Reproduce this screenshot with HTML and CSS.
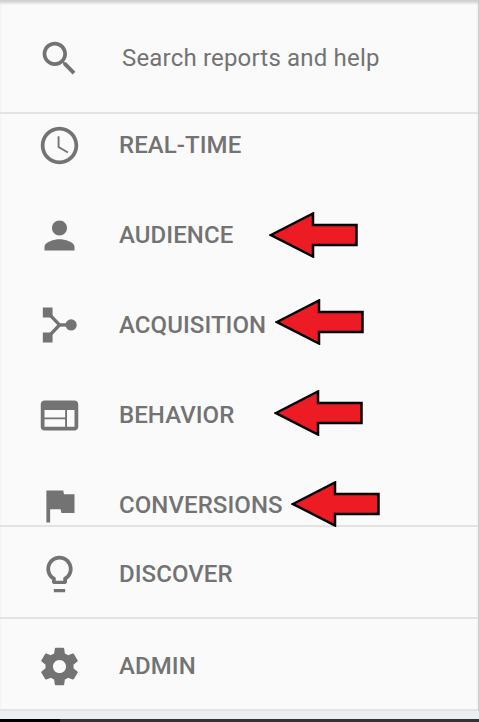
FILE: index.html
```html
<!DOCTYPE html>
<html lang="en">
<head>
  <meta charset="UTF-8">
  <meta name="viewport" content="width=device-width, initial-scale=1.0">
  <title>Reports menu</title>
  <link rel="stylesheet" href="styles.css">
</head>
<body>
  <svg class="sprite" width="0" height="0">
    <symbol id="seta" viewBox="0 0 90 46">
      <path d="M2 23 L44 1.500 V13 H87.500 V33 H44 V44.500 Z" fill="#ed1c24" stroke="#000" stroke-width="2.500"/>
    </symbol>
  </svg>
  <div class="painel">
    <div class="busca">
      <svg class="icone" viewBox="0 0 24 24"><path d="M15.5 14h-.79l-.28-.27C15.41 12.59 16 11.11 16 9.5 16 5.910 13.090 3 9.5 3S3 5.910 3 9.5 5.910 16 9.5 16c1.610 0 3.090-.59 4.230-1.570l.27.28v.79l5 4.990L20.490 19l-4.990-5zm-6 0C7.010 14 5 11.990 5 9.500S7.010 5 9.500 5 14 7.010 14 9.500 11.990 14 9.500 14z"/></svg>
      <span class="busca-texto">Search reports and help</span>
    </div>

    <ul class="lista">
      <li class="item">
        <svg class="icone" viewBox="0 0 24 24"><path d="M11.990 2C6.470 2 2 6.480 2 12s4.470 10 9.990 10C17.520 22 22 17.520 22 12S17.520 2 11.990 2zM12 20c-4.420 0-8-3.580-8-8s3.580-8 8-8 8 3.580 8 8-3.580 8-8 8z"/><path d="M12 7h-1v6l5.250 3.150.5-.83-4.750-2.820z"/></svg>
        <span>REAL-TIME</span>
      </li>
      <li class="item">
        <svg class="icone" viewBox="0 0 24 24"><path d="M12 12c2.210 0 4-1.790 4-4s-1.790-4-4-4-4 1.790-4 4 1.790 4 4 4zm0 2c-2.670 0-8 1.340-8 4v2h16v-2c0-2.660-5.330-4-8-4z"/></svg>
        <span>AUDIENCE</span>
      </li>
      <li class="item">
        <svg class="icone" viewBox="0 0 24 24"><path d="M3.100 2.400h5.200v5.300H3.100zM3.100 15.700h5.200V21H3.100z"/><path d="M7 6.500 L12 11.700 L7 17" fill="none" stroke="currentColor" stroke-width="1.800"/><path d="M12 11.700h5" stroke="currentColor" stroke-width="1.800"/><circle cx="18.200" cy="11.700" r="3"/></svg>
        <span>ACQUISITION</span>
      </li>
      <li class="item">
        <svg class="icone" viewBox="0 0 24 24"><path d="M20 4H4c-1.100 0-1.990.9-1.990 2L2 18c0 1.100.9 2 2 2h16c1.100 0 2-.9 2-2V6c0-1.100-.9-2-2-2zm-5 14H4v-4h11v4zm0-5H4V9h11v4zm5 5h-4V9h4v9z"/></svg>
        <span>BEHAVIOR</span>
      </li>
      <li class="item">
        <svg class="icone" viewBox="0 0 24 24"><path d="M14.400 6L14 4H5v17h2v-7h5.600l.4 2h7V6z"/></svg>
        <span>CONVERSIONS</span>
      </li>
    </ul>

    <div class="rodape-item">
      <svg class="icone" viewBox="0 0 24 24"><path d="M9 19.700h6v1.800H9zM12 2C8.140 2 5 5.140 5 9c0 2.380 1.190 4.470 3 5.740V16c0 .55.45 1 1 1h6c.55 0 1-.45 1-1v-1.260c1.810-1.270 3-3.360 3-5.740 0-3.860-3.140-7-7-7zm2.850 11.100l-.85.6V15.300h-4v-1.600l-.85-.6C7.800 12.160 7 10.630 7 9c0-2.760 2.240-5 5-5s5 2.240 5 5c0 1.630-.8 3.160-2.150 4.100z"/></svg>
      <span>DISCOVER</span>
    </div>
    <div class="rodape-item">
      <svg class="icone" viewBox="0 0 24 24"><path d="M19.430 12.980c.04-.32.07-.64.07-.98s-.03-.66-.07-.98l2.110-1.650c.19-.15.24-.42.12-.64l-2-3.460c-.12-.22-.39-.3-.61-.22l-2.490 1c-.52-.4-1.080-.73-1.690-.98l-.38-2.650C14.460 2.180 14.250 2 14 2h-4c-.25 0-.46.18-.49.42l-.38 2.650c-.61.25-1.170.59-1.690.98l-2.490-1c-.23-.09-.49 0-.61.22l-2 3.460c-.13.22-.07.49.12.64l2.110 1.650c-.04.32-.07.65-.07.98s.03.66.07.98l-2.110 1.650c-.19.15-.24.42-.12.64l2 3.460c.12.22.39.3.61.22l2.490-1c.52.4 1.080.73 1.690.98l.38 2.650c.03.24.24.42.49.42h4c.25 0 .46-.18.49-.42l.38-2.650c.61-.25 1.170-.59 1.690-.98l2.490 1c.23.09.49 0 .61-.22l2-3.460c.12-.22.07-.49-.12-.64l-2.110-1.650zM12 15.500c-1.930 0-3.500-1.570-3.500-3.500s1.570-3.500 3.500-3.500 3.500 1.570 3.500 3.500-1.570 3.500-3.500 3.500z"/></svg>
      <span>ADMIN</span>
    </div>
  </div>
  <div class="faixa"></div>
  <div class="barra-base"><div class="barra-preta"></div></div>

  <svg class="seta seta-audience"><use href="#seta"/></svg>
  <svg class="seta seta-acquisition"><use href="#seta"/></svg>
  <svg class="seta seta-behavior"><use href="#seta"/></svg>
  <svg class="seta seta-conversions"><use href="#seta"/></svg>
</body>
</html>
```

FILE: styles.css
```css
:root {
  --fundo: #fafafa;
  --linha: #e3e3e3;
  --texto: #737373;
}
* {
  margin: 0;
  padding: 0;
  box-sizing: border-box;
}
html, body {
  height: 100%;
  overflow: hidden;
}
body {
  position: relative;
  font-family: Roboto, sans-serif;
  background-color: var(--fundo);
  color: var(--texto);
}
.sprite {
  display: block;
  height: 0;
}
.painel {
  height: 711px;
  display: flex;
  flex-direction: column;
  background-color: var(--fundo);
  border-right: 1px solid #cccccc;
  box-shadow: inset 0 4px 3px -1px #cfcfcf;
}
.icone {
  width: 45px;
  height: 45px;
  flex-shrink: 0;
  fill: currentColor;
}
.busca {
  height: 114px;
  flex-shrink: 0;
  display: flex;
  align-items: center;
  padding: 4px 0 0 37px;
  border-bottom: 2px solid var(--linha);
}
.busca-texto {
  margin-left: 40px;
  font-size: 24px;
  letter-spacing: .18px;
}
.lista {
  list-style: none;
  height: 413px;
  flex-shrink: 0;
  overflow: hidden;
  border-bottom: 2px solid var(--linha);
}
.item {
  height: 90px;
  display: flex;
  align-items: center;
  padding-left: 37px;
  font-size: 24px;
  font-weight: 500;
  letter-spacing: .07px;
}
.item:first-child {
  margin-top: -14px;
}
.item span, .rodape-item span {
  margin-left: 37px;
}
.rodape-item {
  height: 92px;
  flex-shrink: 0;
  display: flex;
  align-items: center;
  padding: 4px 0 0 37px;
  font-size: 24px;
  font-weight: 500;
  letter-spacing: .07px;
  border-bottom: 2px solid var(--linha);
}
.faixa {
  height: 8px;
  background-color: #ebeff2;
}
.barra-base {
  height: 3px;
  background-color: #333;
}
.barra-preta {
  width: 60px;
  height: 100%;
  background-color: #000;
}
.seta {
  position: absolute;
  width: 90px;
  height: 46px;
}
.seta-audience { left: 269px; top: 212px; }
.seta-acquisition { left: 275px; top: 299px; }
.seta-behavior { left: 274px; top: 390px; }
.seta-conversions { left: 291px; top: 481px; }
```
